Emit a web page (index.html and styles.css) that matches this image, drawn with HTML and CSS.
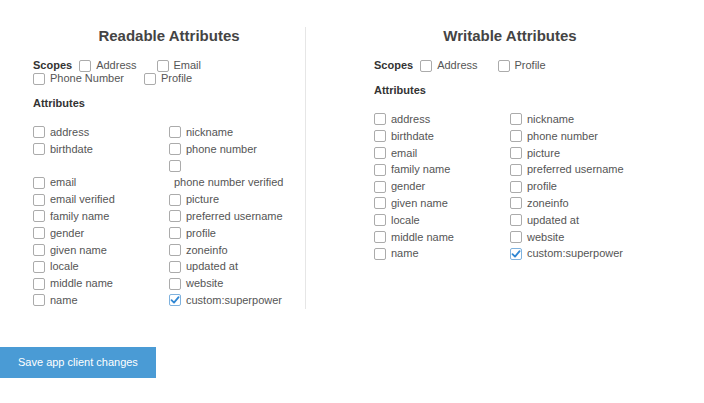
FILE: index.html
```html
<!DOCTYPE html>
<html>
<head>
<meta charset="utf-8">
<link rel="stylesheet" href="styles.css">
</head>
<body>
<div class="panels">
  <section class="panel panel-left">
    <h2 class="title">Readable Attributes</h2>
    <div class="scopes">
      <span class="scopes-label">Scopes</span>
      <label class="scope"><span class="box"></span><span class="txt">Address</span></label>
      <label class="scope"><span class="box"></span><span class="txt">Email</span></label>
      <label class="scope"><span class="box"></span><span class="txt">Phone Number</span></label>
      <label class="scope"><span class="box"></span><span class="txt">Profile</span></label>
    </div>
    <h3 class="subtitle">Attributes</h3>
    <div class="attrs">
      <label class="attr"><span class="box"></span><span class="txt">address</span></label>
      <label class="attr"><span class="box"></span><span class="txt">nickname</span></label>
      <label class="attr"><span class="box"></span><span class="txt">birthdate</span></label>
      <label class="attr"><span class="box"></span><span class="txt">phone number</span></label>
      <label class="attr"><span class="box"></span><span class="txt">email</span></label>
      <label class="attr"><span class="box"></span><span class="txt">phone number verified</span></label>
      <label class="attr"><span class="box"></span><span class="txt">email verified</span></label>
      <label class="attr"><span class="box"></span><span class="txt">picture</span></label>
      <label class="attr"><span class="box"></span><span class="txt">family name</span></label>
      <label class="attr"><span class="box"></span><span class="txt">preferred username</span></label>
      <label class="attr"><span class="box"></span><span class="txt">gender</span></label>
      <label class="attr"><span class="box"></span><span class="txt">profile</span></label>
      <label class="attr"><span class="box"></span><span class="txt">given name</span></label>
      <label class="attr"><span class="box"></span><span class="txt">zoneinfo</span></label>
      <label class="attr"><span class="box"></span><span class="txt">locale</span></label>
      <label class="attr"><span class="box"></span><span class="txt">updated at</span></label>
      <label class="attr"><span class="box"></span><span class="txt">middle name</span></label>
      <label class="attr"><span class="box"></span><span class="txt">website</span></label>
      <label class="attr"><span class="box"></span><span class="txt">name</span></label>
      <label class="attr"><span class="box checked"><svg viewBox="0 0 12 12" width="12" height="12"><path d="M2.5 6.2 L5 8.6 L9.6 3.2" fill="none" stroke="#2f86d3" stroke-width="1.8" stroke-linecap="round" stroke-linejoin="round"/></svg></span><span class="txt">custom:superpower</span></label>
    </div>
  </section>
  <section class="panel panel-right">
    <h2 class="title">Writable Attributes</h2>
    <div class="scopes">
      <span class="scopes-label">Scopes</span>
      <label class="scope"><span class="box"></span><span class="txt">Address</span></label>
      <label class="scope"><span class="box"></span><span class="txt">Profile</span></label>
    </div>
    <h3 class="subtitle">Attributes</h3>
    <div class="attrs">
      <label class="attr"><span class="box"></span><span class="txt">address</span></label>
      <label class="attr"><span class="box"></span><span class="txt">nickname</span></label>
      <label class="attr"><span class="box"></span><span class="txt">birthdate</span></label>
      <label class="attr"><span class="box"></span><span class="txt">phone number</span></label>
      <label class="attr"><span class="box"></span><span class="txt">email</span></label>
      <label class="attr"><span class="box"></span><span class="txt">picture</span></label>
      <label class="attr"><span class="box"></span><span class="txt">family name</span></label>
      <label class="attr"><span class="box"></span><span class="txt">preferred username</span></label>
      <label class="attr"><span class="box"></span><span class="txt">gender</span></label>
      <label class="attr"><span class="box"></span><span class="txt">profile</span></label>
      <label class="attr"><span class="box"></span><span class="txt">given name</span></label>
      <label class="attr"><span class="box"></span><span class="txt">zoneinfo</span></label>
      <label class="attr"><span class="box"></span><span class="txt">locale</span></label>
      <label class="attr"><span class="box"></span><span class="txt">updated at</span></label>
      <label class="attr"><span class="box"></span><span class="txt">middle name</span></label>
      <label class="attr"><span class="box"></span><span class="txt">website</span></label>
      <label class="attr"><span class="box"></span><span class="txt">name</span></label>
      <label class="attr"><span class="box checked"><svg viewBox="0 0 12 12" width="12" height="12"><path d="M2.5 6.2 L5 8.6 L9.6 3.2" fill="none" stroke="#2f86d3" stroke-width="1.8" stroke-linecap="round" stroke-linejoin="round"/></svg></span><span class="txt">custom:superpower</span></label>
    </div>
  </section>
</div>
<button class="save-btn">Save app client changes</button>
</body>
</html>
```

FILE: styles.css
```css
html, body {
  margin: 0;
  padding: 0;
  background: #ffffff;
}
body {
  font-family: "Liberation Sans", Arial, sans-serif;
  font-size: 11px;
  color: #555555;
}
.panels {
  display: flex;
  align-items: flex-start;
  padding-top: 27px;
}
.panel {
  width: 272px;
  box-sizing: content-box;
}
.panel-left {
  margin-left: 33px;
  border-right: 1px solid #e6e6e6;
}
.panel-right {
  padding-left: 68px;
}
.title {
  margin: 0;
  font-size: 15px;
  line-height: 17px;
  font-weight: bold;
  color: #444444;
  text-align: center;
}
.scopes {
  display: flex;
  flex-wrap: wrap;
  align-items: center;
  margin-top: 15px;
}
.scopes-label {
  font-weight: bold;
  color: #333333;
  line-height: 13px;
  margin-right: 7px;
}
.scope {
  display: flex;
  align-items: center;
  height: 13px;
  margin-right: 20px;
}
.box {
  display: inline-block;
  width: 12px;
  height: 12px;
  box-sizing: border-box;
  border: 1px solid #ababab;
  border-radius: 2px;
  background: #ffffff;
  flex: none;
}
.box.checked {
  border-color: #7fb2de;
  position: relative;
}
.box.checked svg {
  position: absolute;
  left: -1px;
  top: -1px;
}
.txt {
  margin-left: 5px;
  line-height: 13px;
}
.subtitle {
  margin: 12px 0 0;
  font-size: 11px;
  line-height: 13px;
  font-weight: bold;
  color: #333333;
}
.attrs {
  display: grid;
  grid-template-columns: 136px 136px;
  align-items: end;
  margin-top: 14px;
}
.attr {
  display: flex;
  flex-wrap: wrap;
  align-items: center;
  width: 122px;
}
.attr .txt {
  line-height: 16.8px;
}
.attr .box {
  margin: 2.4px 0;
}
.save-btn {
  display: block;
  margin-top: 38px;
  height: 31px;
  padding: 0 18px;
  border: none;
  border-radius: 0;
  background: #4a9bd5;
  color: #ffffff;
  font-family: "Liberation Sans", Arial, sans-serif;
  font-size: 11px;
}
```
